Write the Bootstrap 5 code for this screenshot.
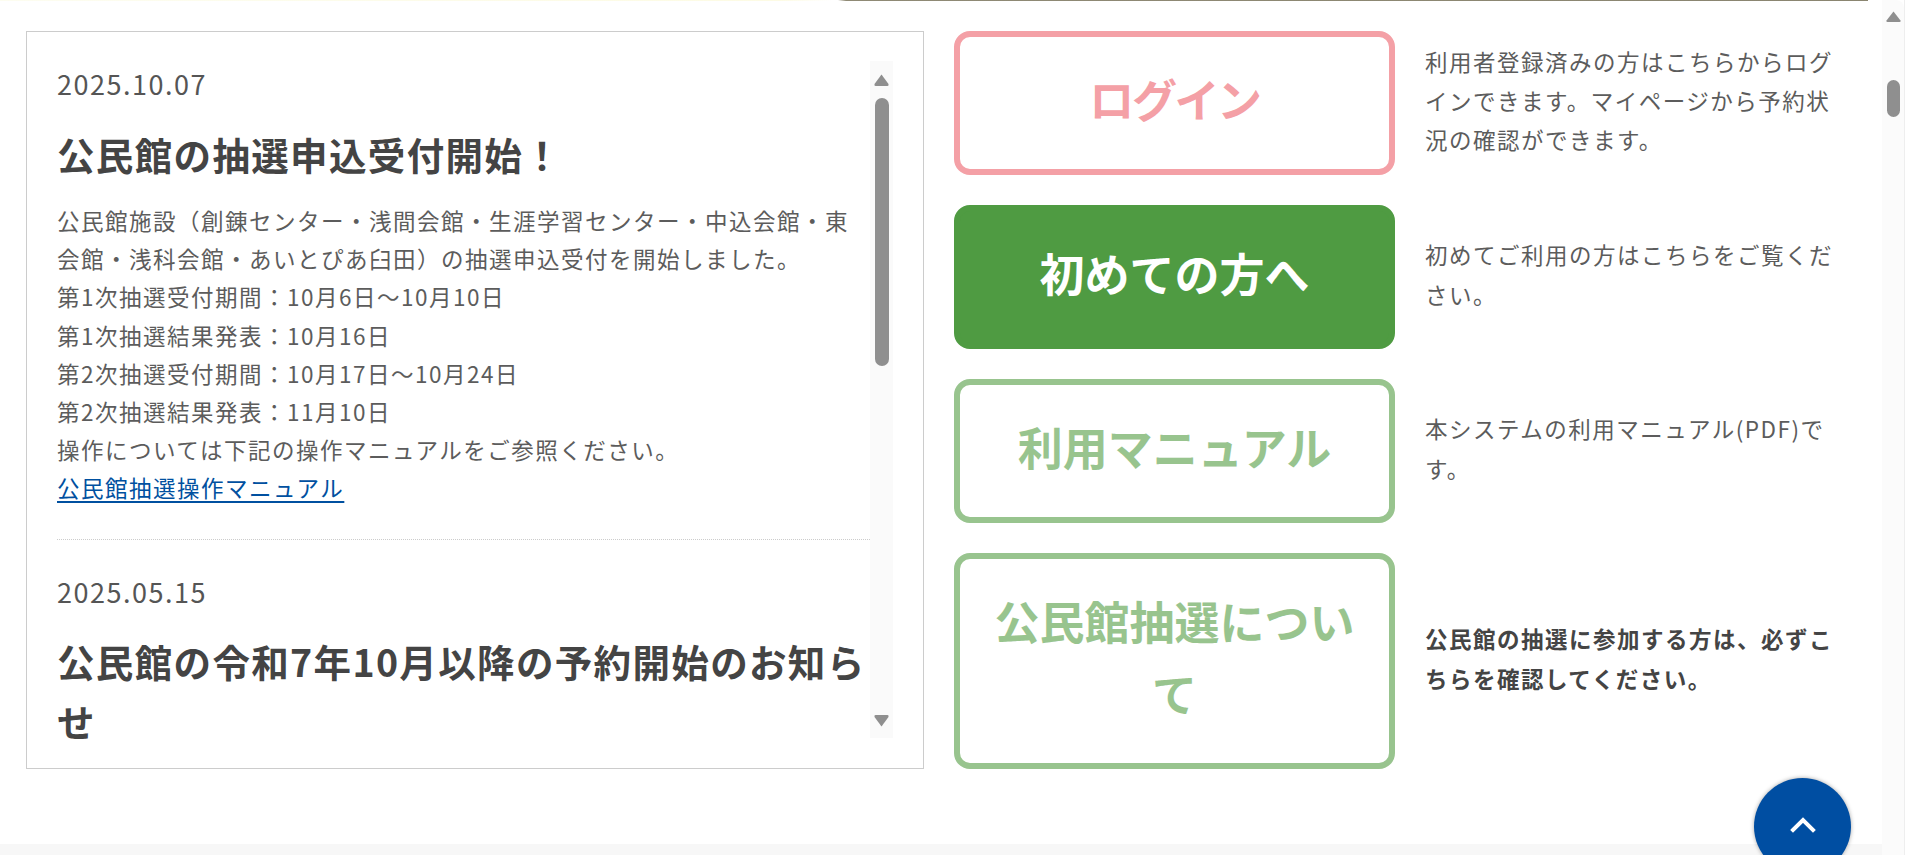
<!DOCTYPE html>
<html lang="ja">
<head>
<meta charset="utf-8">
<title>公民館 お知らせ</title>
<link rel="stylesheet" href="https://cdn.jsdelivr.net/npm/bootstrap@5.3.0/dist/css/bootstrap.min.css">
<style>
html,body{height:855px;overflow:hidden;background:#fff;}
body{font-family:"Noto Sans CJK JP","Noto Sans",sans-serif;color:#5c5c5c;font-size:22.5px;letter-spacing:1.5px;}
.shot{height:855px;}
.page-col{width:1882px;flex:none;}
.top-strip{height:1px;width:1868px;flex:none;background:linear-gradient(90deg,#fdfdf0 0,#fdfbe4 780px,#fff 832px,#fff 838px,#8f8a75 846px,#8a8570 100%);}
.content-row{padding:30px 0 0 26px;gap:30px;}
.foot-band{height:11px;flex:none;background:#f7f7f7;}
.news-box{width:898px;height:738px;flex:none;border:1.5px solid #ccc;padding:29px 30px 0 30px;}
.news-list{width:813px;flex:none;}
.news-date{font-size:27px;line-height:46px;margin-bottom:16.5px;color:#555;}
.news-title{font-size:37.5px;line-height:60px;font-weight:700;color:#444;margin-bottom:17.5px;letter-spacing:1.35px;}
.news-body{line-height:38.2px;margin:0;}
.news-body a{color:#0050a0;text-decoration-thickness:2px;text-underline-offset:4px;}
.news-sep{border-top:1px dotted #ccc;margin:32.4px 0 28.6px;opacity:1;}
.bar-in{width:23px;height:677px;flex:none;background:#fafafa;}
.bar-page{width:22px;flex:none;background:#fbfbfb;border-radius:0 8px 0 0;}
.edge-gap{width:3px;flex:none;border-left:1px solid #eee;}
.tri{display:block;flex:none;fill:#8f8f8f;}
.bar-in .tri-up{margin-top:13px;}
.bar-in .thumb{margin-top:12px;width:14px;height:268px;}
.bar-in .tri-down{margin:auto 0 11px;}
.bar-page .tri-up{margin-top:11px;}
.bar-page .thumb{margin-top:58px;width:13px;height:37px;}
.thumb{background:#8f8f8f;border-radius:7px;flex:none;}
.act-list{gap:30px;width:891px;flex:none;}
.act-row{gap:30px;}
.act-btn{width:441px;flex:none;border:6px solid;border-radius:16px;padding:26px 30px 34px;font-size:45px;line-height:72px;font-weight:700;letter-spacing:0;background:#fff;}
.act-pink,.act-pink:hover{border-color:#f4a0a6;color:#f4a0a6;background:#fff;letter-spacing:-2.4px;}
.act-green,.act-green:hover{border-color:#4f9b42;color:#fff;background:#4f9b42;}
.act-pale,.act-pale:hover{border-color:#98c48e;color:#98c48e;background:#fff;}
.act-note{width:420px;line-height:39.3px;margin:0;padding-bottom:5px;color:#5c5c5c;}
.act-strong{font-weight:700;color:#444;}
.to-top{right:56px;top:778px;width:97px;height:97px;background:#004ea2;box-shadow:0 0 4px rgba(0,0,0,.35);}
.chev{margin-top:37px;}
</style>
</head>
<body>
<div class="shot d-flex position-relative">
  <div class="page-col d-flex flex-column">
    <div class="top-strip"></div>
    <div class="content-row d-flex flex-grow-1">
      <section class="news-box d-flex">
        <div class="news-list overflow-hidden">
          <article>
            <p class="news-date">2025.10.07</p>
            <h2 class="news-title">公民館の抽選申込受付開始！</h2>
            <p class="news-body">公民館施設（創錬センター・浅間会館・生涯学習センター・中込会館・東会館・浅科会館・あいとぴあ臼田）の抽選申込受付を開始しました。<br>第1次抽選受付期間：10月6日～10月10日<br>第1次抽選結果発表：10月16日<br>第2次抽選受付期間：10月17日～10月24日<br>第2次抽選結果発表：11月10日<br>操作については下記の操作マニュアルをご参照ください。<br><a href="#">公民館抽選操作マニュアル</a></p>
          </article>
          <hr class="news-sep">
          <article>
            <p class="news-date">2025.05.15</p>
            <h2 class="news-title">公民館の令和7年10月以降の予約開始のお知らせ</h2>
          </article>
        </div>
        <div class="bar-in d-flex flex-column align-items-center">
          <svg class="tri tri-up" width="15" height="12" viewBox="0 0 15 12"><path d="M7.5 0.5 14.5 10Q15 12 13.5 12H1.5Q0 12 .5 10Z"/></svg>
          <div class="thumb"></div>
          <svg class="tri tri-down" width="15" height="12" viewBox="0 0 15 12"><path d="M7.5 11.5 14.5 2Q15 0 13.5 0H1.5Q0 0 .5 2Z"/></svg>
        </div>
      </section>
      <div class="act-list d-flex flex-column">
        <div class="act-row d-flex align-items-center">
          <a href="#" class="btn act-btn act-pink">ログイン</a>
          <p class="act-note">利用者登録済みの方はこちらからログインできます。マイページから予約状況の確認ができます。</p>
        </div>
        <div class="act-row d-flex align-items-center">
          <a href="#" class="btn act-btn act-green">初めての方へ</a>
          <p class="act-note">初めてご利用の方はこちらをご覧ください。</p>
        </div>
        <div class="act-row d-flex align-items-center">
          <a href="#" class="btn act-btn act-pale">利用マニュアル</a>
          <p class="act-note">本システムの利用マニュアル(PDF)です。</p>
        </div>
        <div class="act-row d-flex align-items-center">
          <a href="#" class="btn act-btn act-pale">公民館抽選について</a>
          <p class="act-note act-strong">公民館の抽選に参加する方は、必ずこちらを確認してください。</p>
        </div>
      </div>
    </div>
    <div class="foot-band"></div>
  </div>
  <div class="bar-page d-flex flex-column align-items-center">
    <svg class="tri tri-up" width="15" height="11" viewBox="0 0 15 11"><path d="M7.5 0.5 14.5 9.5Q15 11 13.5 11H1.5Q0 11 .5 9.5Z"/></svg>
    <div class="thumb"></div>
  </div>
  <div class="edge-gap"></div>
  <a href="#" class="to-top position-absolute rounded-circle d-flex justify-content-center" aria-label="ページ上部へ">
    <svg class="chev" width="30" height="18" viewBox="0 0 30 18"><path d="M5 15 15 5 25 15" fill="none" stroke="#fff" stroke-width="4" stroke-linecap="square"/></svg>
  </a>
</div>
<script src="https://cdn.jsdelivr.net/npm/bootstrap@5.3.0/dist/js/bootstrap.bundle.min.js"></script>
</body>
</html>
